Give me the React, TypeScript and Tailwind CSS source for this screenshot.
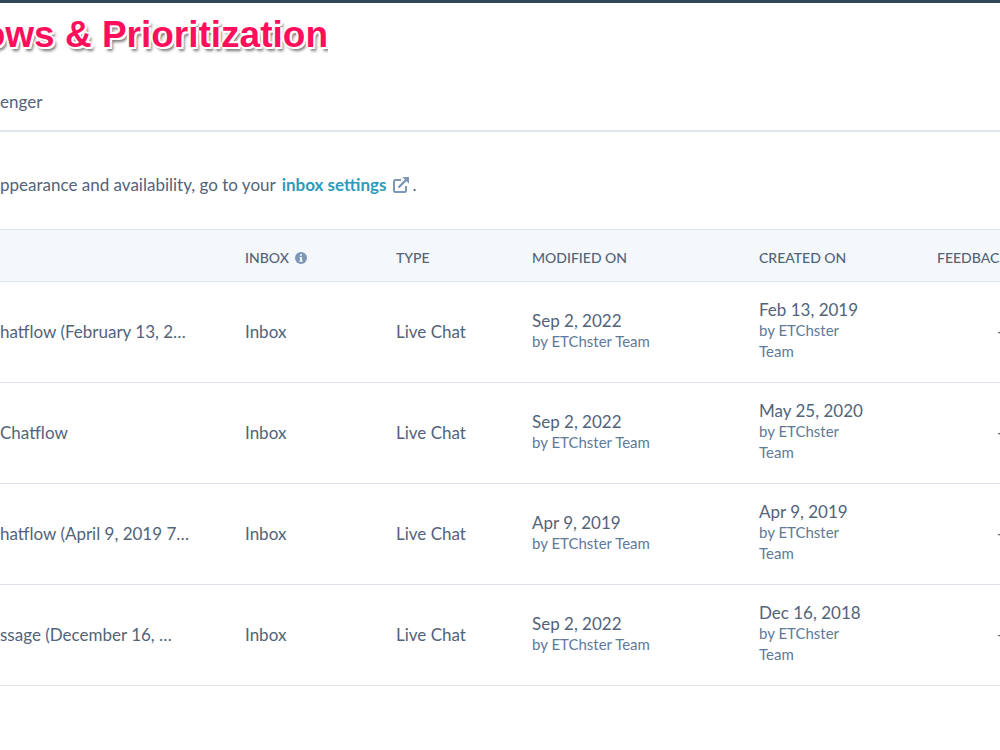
import React from 'react';

interface Stamp {
    date: string;
    author: string;
}

interface Chatflow {
    name: string;
    inbox: string;
    type: string;
    modified: Stamp;
    created: Stamp;
    feedback: string;
}

const AUTHOR = 'ETChster Team';

const chatflows: Chatflow[] = [
    {
        name: 'hatflow (February 13, 2…',
        inbox: 'Inbox',
        type: 'Live Chat',
        modified: { date: 'Sep 2, 2022', author: AUTHOR },
        created: { date: 'Feb 13, 2019', author: AUTHOR },
        feedback: '--',
    },
    {
        name: 'Chatflow',
        inbox: 'Inbox',
        type: 'Live Chat',
        modified: { date: 'Sep 2, 2022', author: AUTHOR },
        created: { date: 'May 25, 2020', author: AUTHOR },
        feedback: '--',
    },
    {
        name: 'hatflow (April 9, 2019 7…',
        inbox: 'Inbox',
        type: 'Live Chat',
        modified: { date: 'Apr 9, 2019', author: AUTHOR },
        created: { date: 'Apr 9, 2019', author: AUTHOR },
        feedback: '--',
    },
    {
        name: 'ssage (December 16, …',
        inbox: 'Inbox',
        type: 'Live Chat',
        modified: { date: 'Sep 2, 2022', author: AUTHOR },
        created: { date: 'Dec 16, 2018', author: AUTHOR },
        feedback: '--',
    },
];

const ExternalLinkIcon: React.FC = () => (
    <svg className="w-4 h-4 shrink-0" viewBox="0 0 16 16" fill="none" stroke="#7c98b6" strokeWidth="2" aria-hidden="true">
        <path d="M8 3H2.5Q1 3 1 4.500V13.500Q1 15 2.500 15H11.500Q13 15 13 13.500V9" />
        <path d="M5.500 10.500L13 3" strokeWidth="2.400" />
        <path d="M9.300 0H16V6.700Z" fill="#7c98b6" stroke="none" />
    </svg>
);

const InfoIcon: React.FC = () => (
    <svg className="w-3 h-3 shrink-0" viewBox="0 0 12 12" aria-hidden="true">
        <circle cx="6" cy="6" r="6" fill="#7c98b6" />
        <path d="M5 2.200h2v1.600H5zM4.500 5H7v3.500h.7v1.200H4.400V8.500H5V6.100h-.5z" fill="#f5f8fa" />
    </svg>
);

const StampCell: React.FC<{ stamp: Stamp }> = ({ stamp }) => (
    <div className="pb-0.5">
        <div className="text-[17px] leading-5">{stamp.date}</div>
        <div className="text-[15px] leading-[21px] text-[#5f7a98]">by {stamp.author}</div>
    </div>
);

const App: React.FC = () => {
    return (
        <div className="min-h-screen overflow-hidden bg-white border-t-3 border-[#33475b] font-[Lato,sans-serif] text-[17px] text-[#52637a]">
            <header className="h-[129px] border-b-2 border-[#dfe6ee] flex flex-col justify-between pb-4">
                <h1 className="w-[328px] h-16 overflow-hidden flex items-center justify-end whitespace-nowrap font-['Liberation_Sans',Arial,sans-serif] font-bold text-[37px] leading-[64px] text-[#ff0f5b] [text-shadow:2px_0_#fff,-2px_0_#fff,0_2px_#fff,0_-2px_#fff,2px_2px_#fff,3px_4px_3px_#777]">
                    ows &amp; Prioritization
                </h1>
                <nav>
                    <a href="#messenger" className="leading-6">enger</a>
                </nav>
            </header>

            <p className="flex items-center h-[97px] pt-2 leading-6">
                <span className="pr-1.5">ppearance and availability, go to your</span>
                <a href="#inbox-settings" className="inline-flex items-center gap-1.5 pr-1 font-bold text-[#2f9bba]">
                    inbox settings
                    <ExternalLinkIcon />
                </a>
                <span>.</span>
            </p>

            <table className="w-full table-fixed border-separate border-spacing-0 text-left">
                <colgroup>
                    <col className="w-[245px]" />
                    <col className="w-[151px]" />
                    <col className="w-[136px]" />
                    <col className="w-[227px]" />
                    <col className="w-[178px]" />
                    <col />
                </colgroup>
                <thead className="bg-[#f5f8fa] text-sm uppercase [&_th]:h-[53px] [&_th]:p-0 [&_th]:pt-1 [&_th]:border-y [&_th]:border-[#dfe3eb] [&_th]:font-medium">
                    <tr>
                        <th scope="col" aria-label="Name" />
                        <th scope="col">
                            <span className="flex items-center gap-1.5">
                                Inbox
                                <InfoIcon />
                            </span>
                        </th>
                        <th scope="col">Type</th>
                        <th scope="col">Modified on</th>
                        <th scope="col">Created on</th>
                        <th scope="col" className="overflow-hidden whitespace-nowrap">Feedback</th>
                    </tr>
                </thead>
                <tbody className="[&_td]:h-[101px] [&_td]:p-0 [&_td]:border-b [&_td]:border-[#dfe3eb]">
                    {chatflows.map((flow) => (
                        <tr key={flow.name}>
                            <td className="whitespace-nowrap overflow-hidden">{flow.name}</td>
                            <td>{flow.inbox}</td>
                            <td>{flow.type}</td>
                            <td>
                                <StampCell stamp={flow.modified} />
                            </td>
                            <td>
                                <div className="w-[108px]">
                                    <StampCell stamp={flow.created} />
                                </div>
                            </td>
                            <td className="overflow-hidden whitespace-nowrap">
                                <div className="pl-[60px]">{flow.feedback}</div>
                            </td>
                        </tr>
                    ))}
                </tbody>
            </table>
        </div>
    );
};

export default App;
